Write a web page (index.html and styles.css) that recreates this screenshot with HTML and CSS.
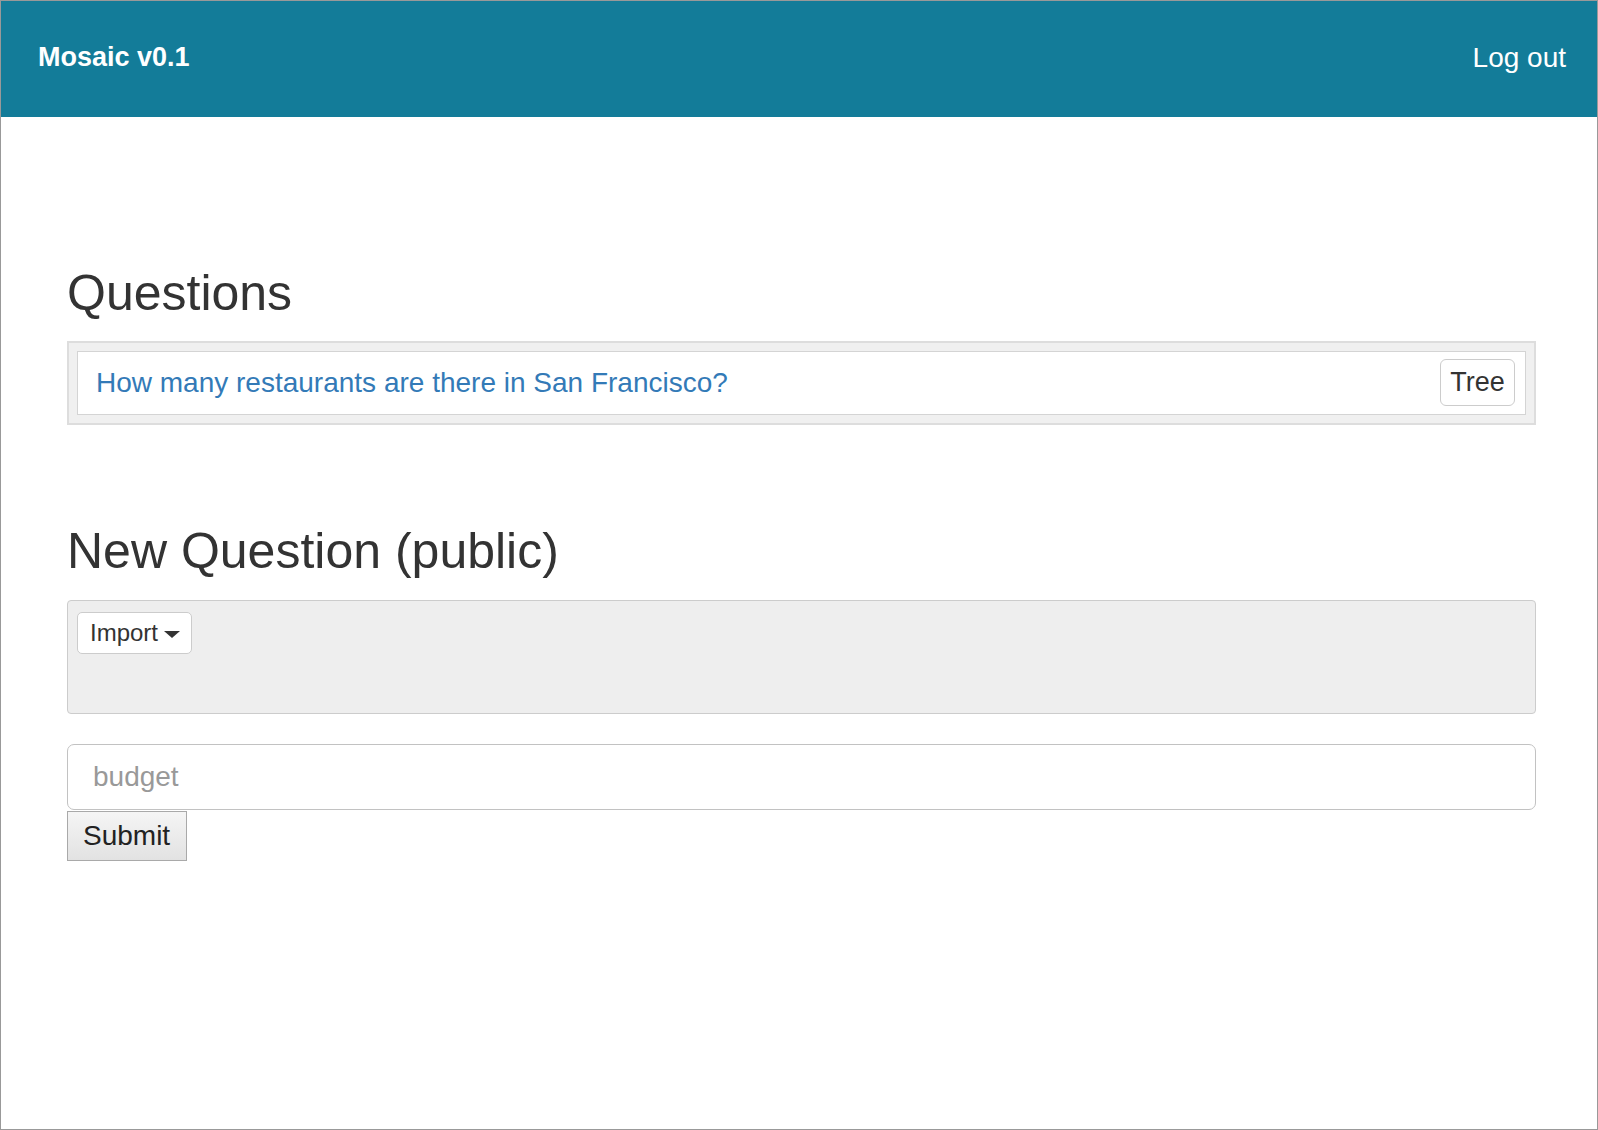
FILE: index.html
```html
<!DOCTYPE html>
<html lang="en">
<head>
<meta charset="utf-8">
<title>Mosaic v0.1</title>
<link rel="stylesheet" href="styles.css">
</head>
<body>
<div class="page">
  <header class="topbar">
    <a class="brand" href="#">Mosaic v0.1</a>
    <a class="logout" href="#">Log out</a>
  </header>
  <main class="content">
    <h1 class="title title-first">Questions</h1>
    <div class="question-list">
      <div class="question-item">
        <a class="question-link" href="#">How many restaurants are there in San Francisco?</a>
        <button class="btn btn-tree" type="button">Tree</button>
      </div>
    </div>
    <h1 class="title title-second">New Question (public)</h1>
    <div class="import-panel">
      <button class="btn btn-import" type="button">Import<span class="caret"></span></button>
    </div>
    <form class="new-form">
      <input class="budget-input" type="text" placeholder="budget">
      <button class="submit-btn" type="submit">Submit</button>
    </form>
  </main>
</div>
</body>
</html>
```

FILE: styles.css
```css
html, body {
  margin: 0;
  padding: 0;
  background: #ffffff;
}

body {
  font-family: "Liberation Sans", Arial, Helvetica, sans-serif;
  color: #333333;
}

.page {
  box-sizing: border-box;
  width: 1598px;
  min-height: 1130px;
  border: 1px solid #999999;
  background: #ffffff;
}

.topbar {
  box-sizing: border-box;
  height: 116px;
  background: #137c99;
  display: flex;
  align-items: center;
  justify-content: space-between;
  padding: 0 31px 3px 37px;
}

.brand {
  color: #ffffff;
  font-weight: bold;
  font-size: 27px;
  text-decoration: none;
}

.logout {
  color: #ffffff;
  font-size: 28px;
  text-decoration: none;
}

.content {
  padding: 0 61px 0 66px;
}

.title {
  font-size: 50px;
  font-weight: normal;
  line-height: 55px;
  margin: 0;
  color: #333333;
}

.title-first {
  margin-top: 149px;
  margin-bottom: 20px;
}

.title-second {
  margin-top: 99px;
  margin-bottom: 21px;
}

.question-list {
  box-sizing: border-box;
  border: 2px solid #dddddd;
  background: #f0f0f0;
  padding: 8px;
}

.question-item {
  box-sizing: border-box;
  height: 64px;
  border: 1px solid #d4d4d4;
  background: #ffffff;
  display: flex;
  align-items: center;
  justify-content: space-between;
  padding: 0 10px 0 18px;
}

.question-link {
  color: #337ab7;
  font-size: 28px;
  text-decoration: none;
}

.btn {
  font-family: "Liberation Sans", Arial, Helvetica, sans-serif;
  background: #ffffff;
  color: #333333;
  border: 1px solid #cccccc;
  border-radius: 6px;
  cursor: pointer;
}

.btn-tree {
  box-sizing: border-box;
  height: 47px;
  width: 75px;
  font-size: 27px;
  padding: 0;
  margin-top: -1px;
}

.import-panel {
  box-sizing: border-box;
  height: 114px;
  border: 1px solid #cccccc;
  border-radius: 4px;
  background: #eeeeee;
  padding: 11px 9px;
}

.btn-import {
  box-sizing: border-box;
  height: 42px;
  width: 115px;
  font-size: 24px;
  padding: 0 0 0 12px;
  display: flex;
  align-items: center;
  border-radius: 5px;
}

.caret {
  display: inline-block;
  width: 0;
  height: 0;
  margin-left: 6px;
  border-left: 8px solid transparent;
  border-right: 8px solid transparent;
  border-top: 7px solid #333333;
  margin-top: 3px;
}

.new-form {
  margin: 30px 0 0 0;
}

.budget-input {
  box-sizing: border-box;
  display: block;
  width: 100%;
  height: 66px;
  border: 1px solid #c2c2c2;
  border-radius: 7px;
  padding: 0 25px;
  font-family: "Liberation Sans", Arial, Helvetica, sans-serif;
  font-size: 28px;
  color: #333333;
  margin: 0;
  outline: none;
}

.budget-input::placeholder {
  color: #999999;
}

.submit-btn {
  box-sizing: border-box;
  display: block;
  margin-top: 1px;
  width: 120px;
  height: 50px;
  border: 1px solid #a9a9a9;
  border-radius: 0;
  background: linear-gradient(#f5f5f5, #e2e2e2);
  font-family: "Liberation Sans", Arial, Helvetica, sans-serif;
  font-size: 28px;
  color: #222222;
  padding: 0 0 0 15px;
  text-align: left;
}
```
